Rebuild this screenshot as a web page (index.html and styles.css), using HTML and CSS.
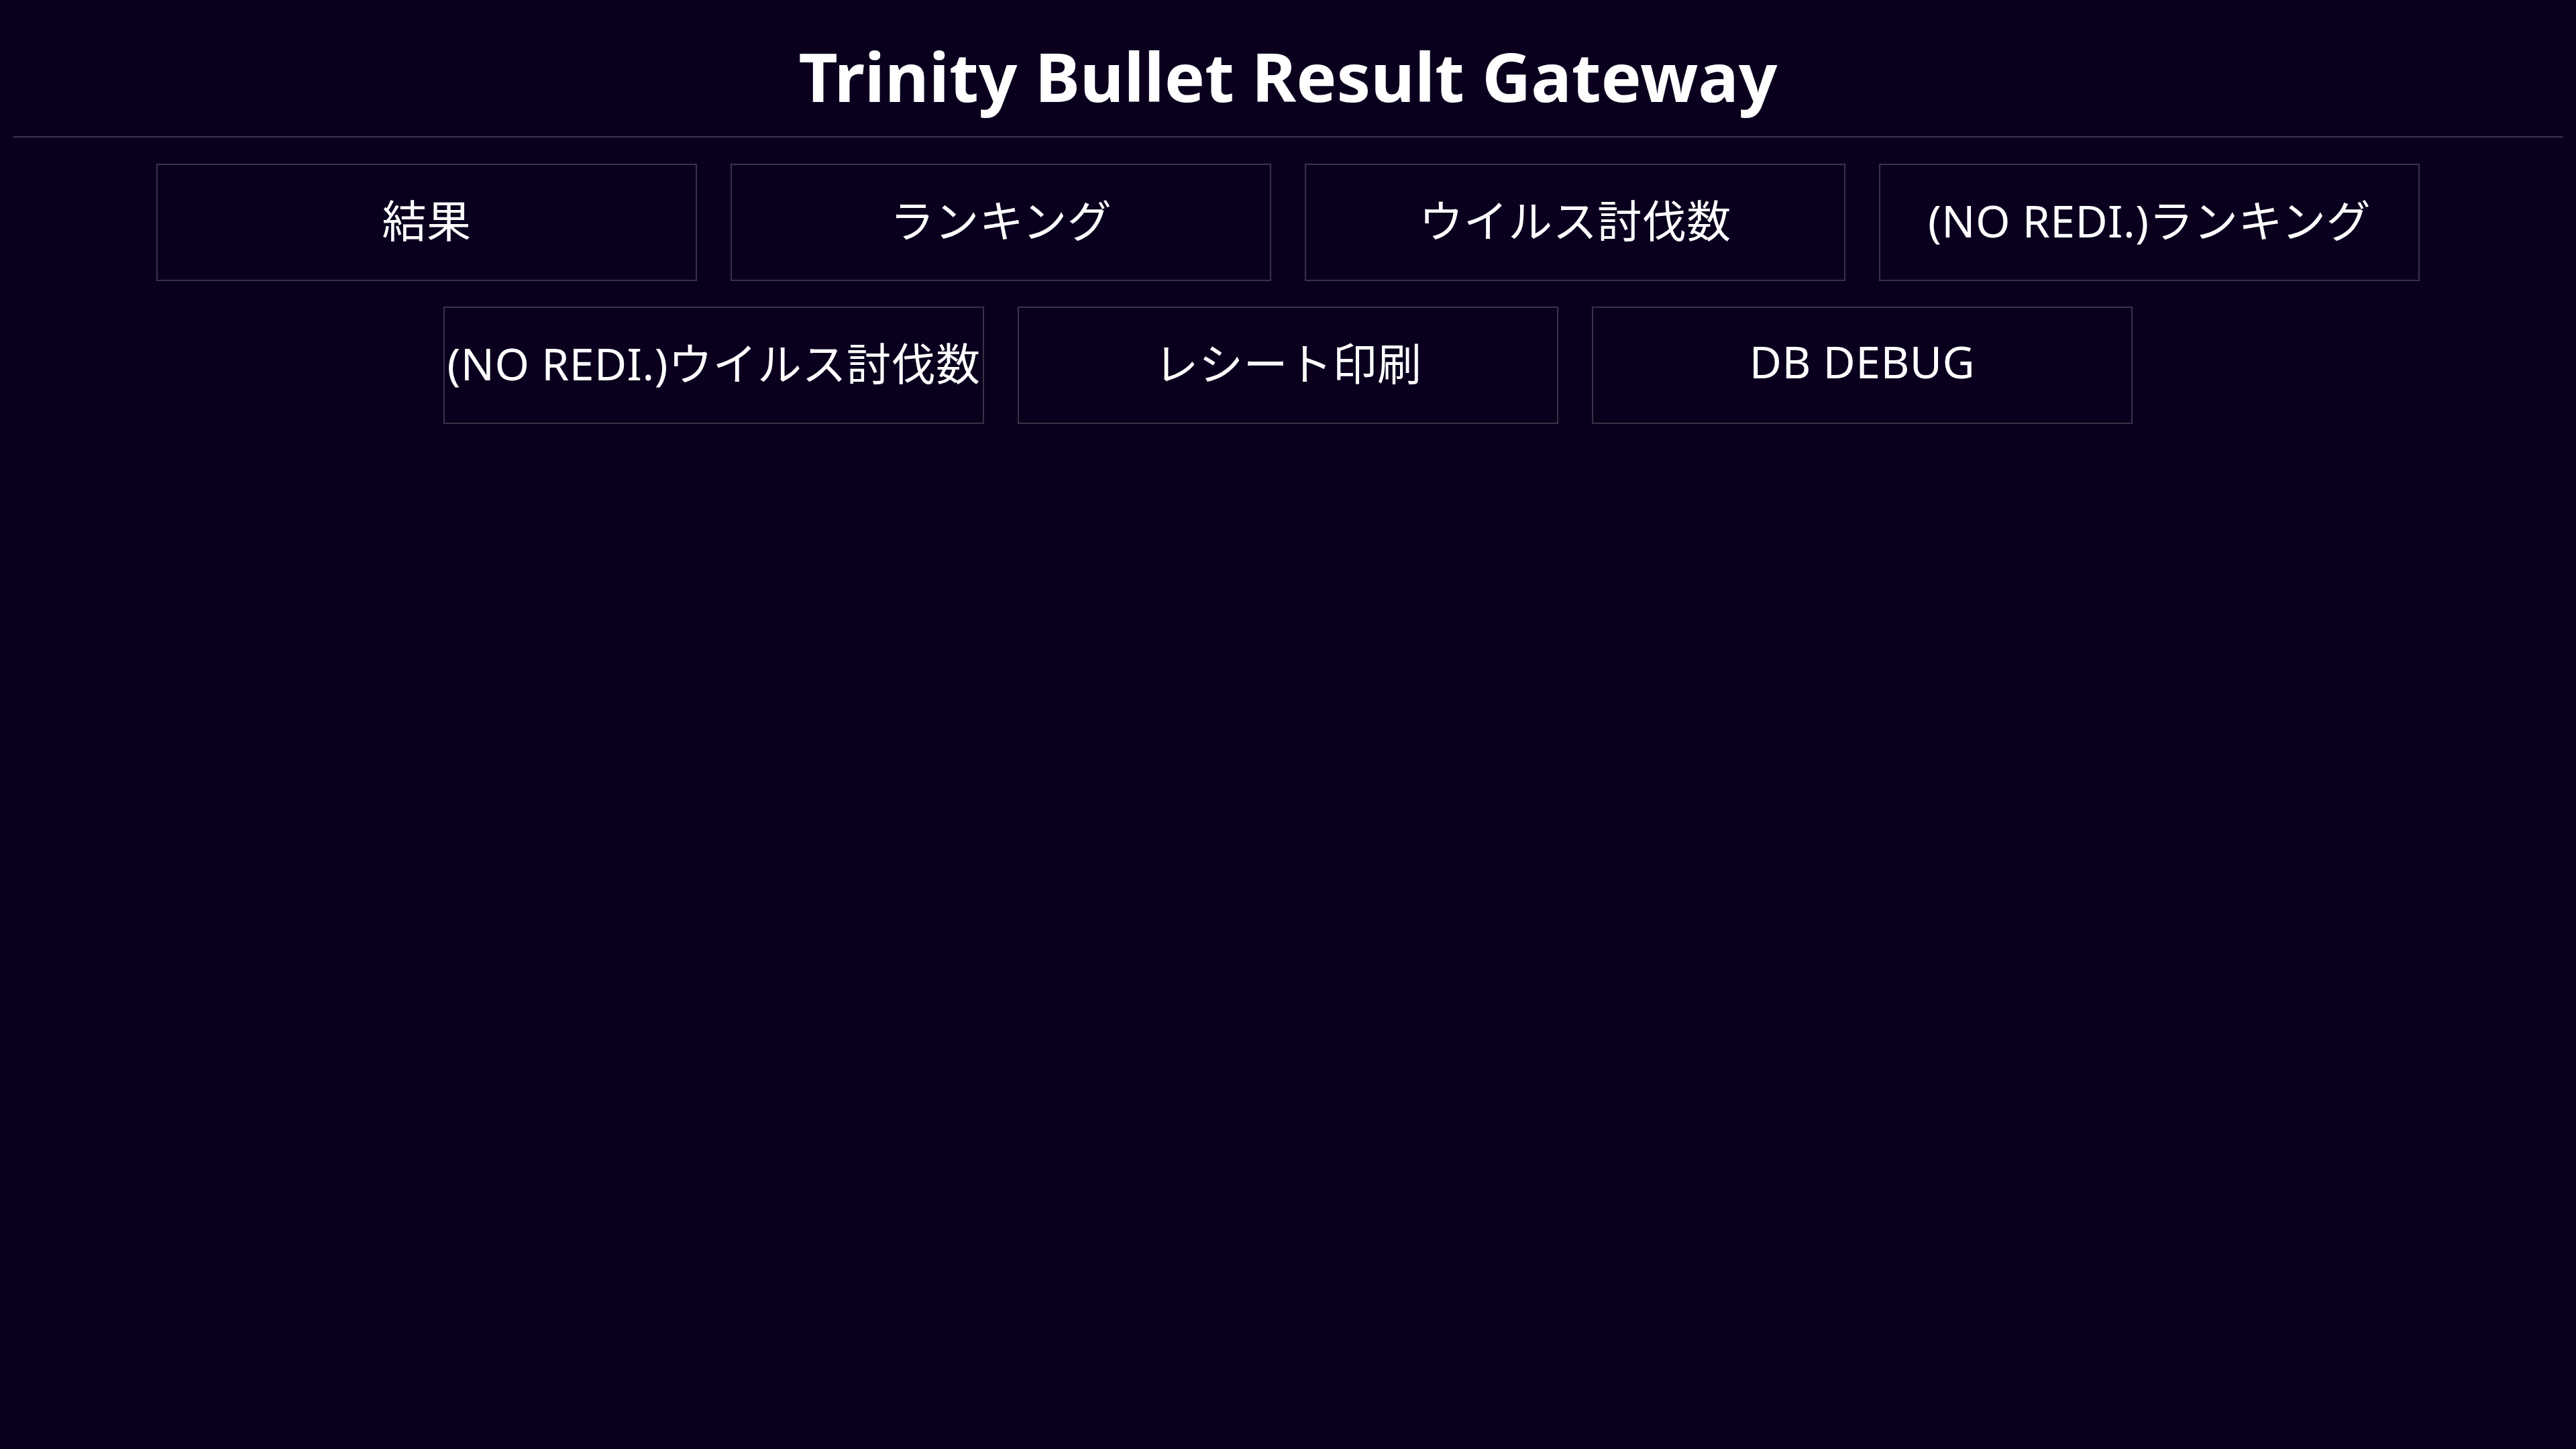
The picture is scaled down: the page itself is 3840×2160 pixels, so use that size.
FILE: index.html
```html
<!DOCTYPE html>
<html lang="ja">
<head>
<meta charset="utf-8">
<title>Trinity Bullet Result Gateway</title>
<link rel="stylesheet" href="styles.css">
</head>
<body>
  <header class="header">
    <h1 class="title">Trinity Bullet Result Gateway</h1>
  </header>
  <nav class="menu">
    <a class="menu-btn" href="#">結果</a>
    <a class="menu-btn" href="#">ランキング</a>
    <a class="menu-btn" href="#">ウイルス討伐数</a>
    <a class="menu-btn" href="#">(NO REDI.)ランキング</a>
    <a class="menu-btn" href="#">(NO REDI.)ウイルス討伐数</a>
    <a class="menu-btn" href="#">レシート印刷</a>
    <a class="menu-btn" href="#">DB DEBUG</a>
  </nav>
</body>
</html>
```

FILE: styles.css
```css
html, body {
  margin: 0;
  padding: 0;
  background: #0a001e;
  color: #ffffff;
  font-family: "Noto Sans", "Noto Sans CJK JP", sans-serif;
}

body {
  min-height: 2160px;
}

.header {
  margin: 0 20px;
  padding-top: 47px;
  padding-bottom: 24px;
  border-bottom: 2px solid #3d3550;
}

.title {
  margin: 0;
  text-align: center;
  font-size: 101px;
  font-weight: 700;
  line-height: 132px;
}

.menu {
  display: flex;
  flex-wrap: wrap;
  justify-content: center;
  column-gap: 50px;
  row-gap: 38px;
  padding-top: 39px;
}

.menu-btn {
  box-sizing: border-box;
  width: 806px;
  height: 175px;
  padding-bottom: 14px;
  display: flex;
  align-items: center;
  justify-content: center;
  border: 2px solid #3a3346;
  color: #ffffff;
  text-decoration: none;
  font-size: 66px;
  white-space: nowrap;
  letter-spacing: 0.5px;
}
```
